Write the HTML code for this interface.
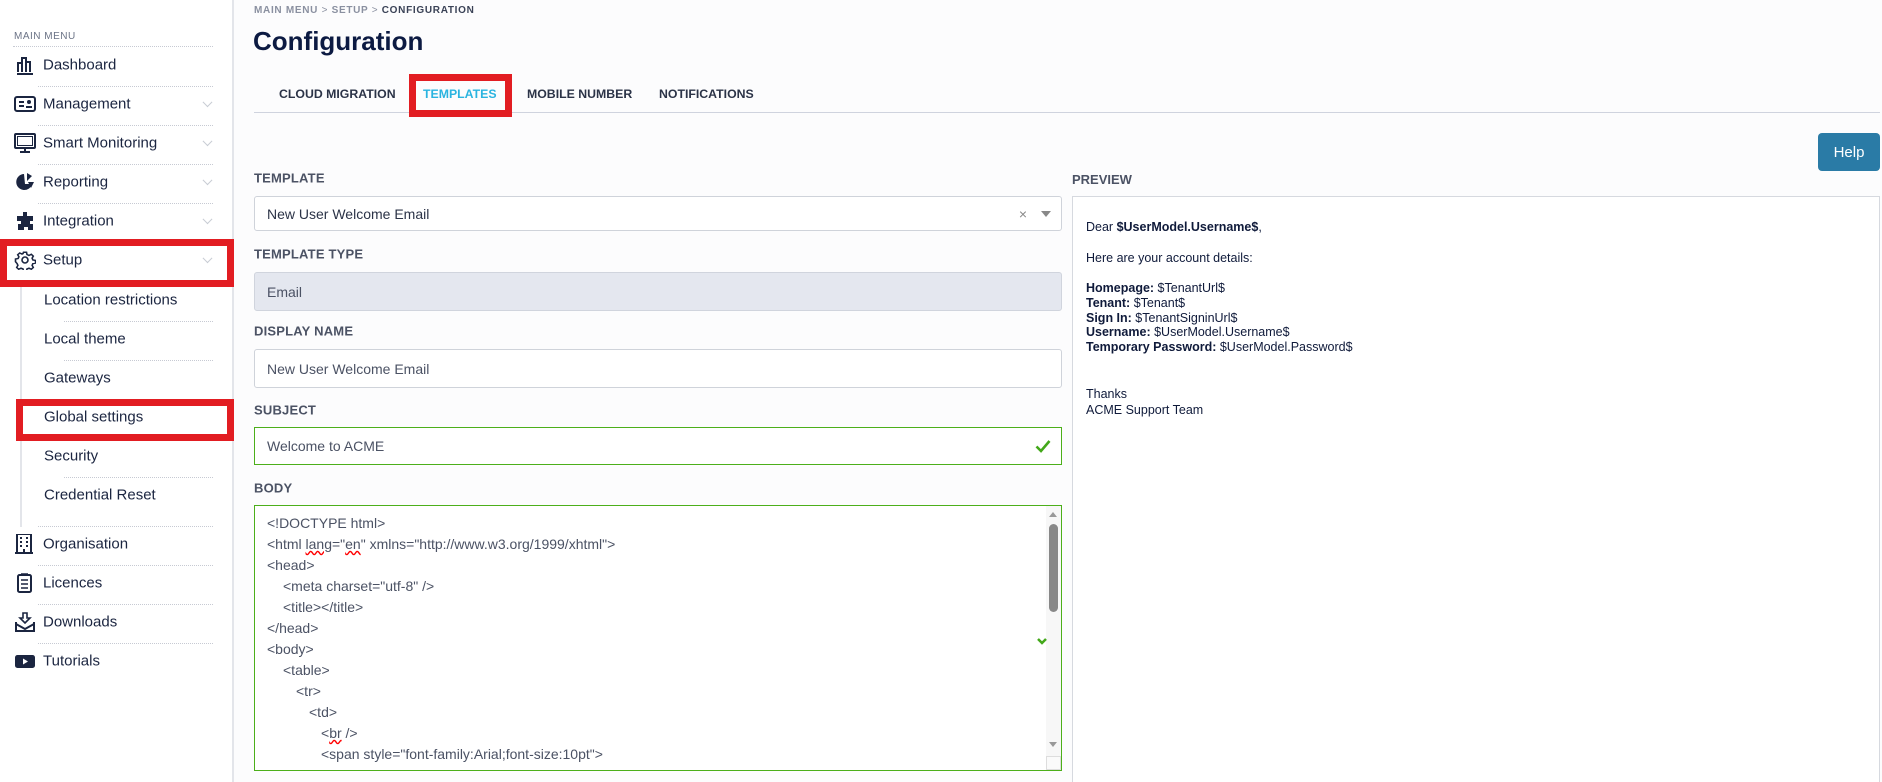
<!DOCTYPE html>
<html><head><meta charset="utf-8"><style>
*{box-sizing:border-box;margin:0;padding:0}
html,body{width:1882px;height:782px;overflow:hidden}
body{background:#fcfcfd;font-family:"Liberation Sans",Arial,sans-serif;position:relative;color:#1b2540}
.abs{position:absolute}
.sb{position:absolute;left:0;top:0;width:234px;height:782px;background:#fff;border-right:2px solid #e3e5ea}
.mm{position:absolute;left:14px;top:31px;font-size:10px;color:#6b7386;letter-spacing:.5px}
.div{position:absolute;border-top:1px dotted #c7cad3;height:0}
.it{position:absolute;left:43px;font-size:15px;color:#1b2540;transform:translateY(-50%)}
.ic{position:absolute;left:14px;width:22px;height:20px;transform:translateY(-50%)}
.chev{position:absolute;left:204px;width:7px;height:7px;border-right:1px solid #c8ccd4;border-bottom:1px solid #c8ccd4;transform:translateY(-75%) rotate(45deg)}
.red{position:absolute;border:7px solid #e21d22}
.lbl{position:absolute;left:254px;font-size:13px;color:#4b5264;font-weight:bold;letter-spacing:.2px;transform:translateY(-50%)}
.box{position:absolute;left:254px;width:808px;border:1px solid #cfd3da;border-radius:3px;background:#fff;font-size:14px;color:#4b5264;padding-left:12px;display:flex;align-items:center}
.code{position:absolute;left:267px;font-size:14px;color:#4b5264;white-space:pre;transform:translateY(-50%)}
.pv{position:absolute;left:1086px;font-family:Arial,"Liberation Sans",sans-serif;font-size:12.5px;color:#0f1a3a;white-space:pre}
.tab{position:absolute;top:94px;font-size:12.3px;font-weight:bold;color:#2b3347;transform:translateY(-50%)}
</style></head><body>
<div class="sb"></div>
<div class="mm">MAIN MENU</div>
<div class="div" style="left:13px;top:46px;width:200px"></div>
<svg class="ic" style="top:65px" viewBox="0 0 22 20"><g fill="none" stroke="#1b2540" stroke-width="2"><path d="M4 17V8h4v9M8 17V3h4v14M12 17V7h4v10"/><path d="M3 19h16"/></g></svg>
<div class="it" style="top:65px">Dashboard</div>
<div class="div" style="left:38px;top:86px;width:175px"></div>
<svg class="ic" style="top:104px" viewBox="0 0 22 20"><rect x="1" y="3" width="20" height="14" rx="2" fill="none" stroke="#1b2540" stroke-width="2"/><path d="M5 8h5M5 12h5" stroke="#1b2540" stroke-width="2"/><circle cx="15" cy="8" r="2" fill="#1b2540"/><path d="M12 13h6" stroke="#1b2540" stroke-width="2"/></svg>
<div class="it" style="top:104px">Management</div><div class="chev" style="top:104px"></div>
<div class="div" style="left:38px;top:125px;width:175px"></div>
<svg class="ic" style="top:143px" viewBox="0 0 22 20"><rect x="1" y="1" width="20" height="14" rx="1" fill="none" stroke="#1b2540" stroke-width="2"/><rect x="3.5" y="3.5" width="15" height="9" fill="none" stroke="#1b2540" stroke-width="1"/><path d="M11 15v3M6 19h10" stroke="#1b2540" stroke-width="2"/></svg>
<div class="it" style="top:143px">Smart Monitoring</div><div class="chev" style="top:143px"></div>
<div class="div" style="left:38px;top:164px;width:175px"></div>
<svg class="ic" style="top:182px" viewBox="0 0 22 20"><path d="M10 2A8 8 0 1 0 18 12L11 12Z" fill="#1b2540"/><path d="M13 1l5 3-5 5z" fill="#1b2540"/><path d="M14 10h6l-3 6z" fill="#1b2540"/></svg>
<div class="it" style="top:182px">Reporting</div><div class="chev" style="top:182px"></div>
<div class="div" style="left:38px;top:203px;width:175px"></div>
<svg class="ic" style="top:221px" viewBox="0 0 22 20"><path d="M9 1h4v4h6v5h-3v3h3v6h-5v-3h-4v3H4v-6h3v-3H3V5h6z" fill="#1b2540"/></svg>
<div class="it" style="top:221px">Integration</div><div class="chev" style="top:221px"></div>
<div class="red" style="left:0;top:239px;width:234px;height:48px"></div>
<svg class="ic" style="top:260px" viewBox="0 0 22 20"><circle cx="11" cy="10" r="3" fill="none" stroke="#1b2540" stroke-width="1.6"/><path d="M9.5 1.5h3l.5 2.5 2 1 2.3-1.2 2 2-1.2 2.3.8 2 2.6.5v3l-2.6.5-.8 2 1.2 2.3-2 2-2.3-1.2-2 .8-.5 2.5h-3l-.5-2.5-2-.8-2.3 1.2-2-2 1.2-2.3-.8-2L1.5 12V9l2.6-.5.8-2L3.7 4.3l2-2L8 3.5l1-.5z" transform="scale(1 .9) translate(0 1)" fill="none" stroke="#1b2540" stroke-width="1.6"/></svg>
<div class="it" style="top:260px">Setup</div><div class="chev" style="top:260px"></div>
<div class="abs" style="left:20px;top:287px;width:2px;height:240px;background:#e3e5ea"></div>
<div class="it" style="top:300px;left:44px">Location restrictions</div>
<div class="div" style="left:64px;top:321px;width:149px"></div>
<div class="it" style="top:339px;left:44px">Local theme</div>
<div class="div" style="left:64px;top:360px;width:149px"></div>
<div class="it" style="top:378px;left:44px">Gateways</div>
<div class="red" style="left:16px;top:399px;width:218px;height:42px"></div>
<div class="it" style="top:417px;left:44px">Global settings</div>
<div class="it" style="top:456px;left:44px">Security</div>
<div class="div" style="left:64px;top:477px;width:149px"></div>
<div class="it" style="top:495px;left:44px">Credential Reset</div>
<div class="div" style="left:38px;top:526px;width:175px"></div>
<svg class="ic" style="top:544px" viewBox="0 0 22 20"><rect x="3" y="0" width="14" height="19" fill="none" stroke="#1b2540" stroke-width="2"/><path d="M1 19h18" stroke="#1b2540" stroke-width="2"/><g fill="#1b2540"><rect x="6" y="3" width="2" height="2"/><rect x="12" y="3" width="2" height="2"/><rect x="6" y="7" width="2" height="2"/><rect x="12" y="7" width="2" height="2"/><rect x="6" y="11" width="2" height="2"/><rect x="12" y="11" width="2" height="2"/><rect x="9" y="15" width="2" height="4"/></g></svg>
<div class="it" style="top:544px">Organisation</div>
<div class="div" style="left:38px;top:565px;width:175px"></div>
<svg class="ic" style="top:583px" viewBox="0 0 22 20"><rect x="4" y="2" width="13" height="17" rx="1.5" fill="none" stroke="#1b2540" stroke-width="2"/><path d="M7 1h7M7 7h7M7 11h7M7 15h7" stroke="#1b2540" stroke-width="1.5"/></svg>
<div class="it" style="top:583px">Licences</div>
<div class="div" style="left:38px;top:604px;width:175px"></div>
<svg class="ic" style="top:622px" viewBox="0 0 22 20"><path d="M2 10v9h18v-9" fill="none" stroke="#1b2540" stroke-width="2"/><path d="M2 12l9 5 9-5" fill="none" stroke="#1b2540" stroke-width="2"/><path d="M9 1h4v5h3l-5 5-5-5h3z" fill="none" stroke="#1b2540" stroke-width="1.6"/></svg>
<div class="it" style="top:622px">Downloads</div>
<div class="div" style="left:38px;top:643px;width:175px"></div>
<svg class="ic" style="top:661px" viewBox="0 0 22 20"><rect x="1" y="4" width="20" height="13" rx="2.5" fill="#1b2540"/><path d="M9 7.5v6l5-3z" fill="#fff"/></svg>
<div class="it" style="top:661px">Tutorials</div>

<div class="abs" style="left:254px;top:5px;font-size:10px;font-weight:bold;letter-spacing:.7px;color:#8a90a0">MAIN MENU <span style="font-weight:normal">&gt;</span> SETUP <span style="font-weight:normal">&gt;</span> <span style="color:#3a4256">CONFIGURATION</span></div>
<div class="abs" style="left:253px;top:26px;font-size:26px;font-weight:bold;color:#0c1a42">Configuration</div>
<div class="tab" style="left:279px">CLOUD MIGRATION</div>
<div class="tab" style="left:423px;color:#2ab4e0">TEMPLATES</div>
<div class="tab" style="left:527px">MOBILE NUMBER</div>
<div class="tab" style="left:659px">NOTIFICATIONS</div>
<div class="abs" style="left:254px;top:112px;width:1626px;height:1px;background:#cfd3de"></div>
<div class="red" style="left:409px;top:74px;width:103px;height:43px"></div>
<div class="abs" style="left:1818px;top:133px;width:62px;height:38px;background:#2a7ba6;border-radius:4px;color:#fff;font-size:15px;display:flex;align-items:center;justify-content:center">Help</div>

<div class="lbl" style="top:178px">TEMPLATE</div>
<div class="box" style="top:196px;height:35px;color:#2b3347">New User Welcome Email<span style="position:absolute;right:34px;color:#888;font-size:14px">×</span><span style="position:absolute;right:10px;width:0;height:0;border-left:5px solid transparent;border-right:5px solid transparent;border-top:6px solid #888"></span></div>
<div class="lbl" style="top:254px">TEMPLATE TYPE</div>
<div class="box" style="top:272px;height:39px;background:#e4e7ef;border-color:#d0d4dd">Email</div>
<div class="lbl" style="top:331px">DISPLAY NAME</div>
<div class="box" style="top:349px;height:39px">New User Welcome Email</div>
<div class="lbl" style="top:410px">SUBJECT</div>
<div class="box" style="top:427px;height:38px;border:1px solid #4caf1a;border-radius:0">Welcome to ACME<svg style="position:absolute;right:10px" width="16" height="14" viewBox="0 0 16 14"><path d="M1.5 7.5l4.5 4.5 8.5-10" fill="none" stroke="#43a81a" stroke-width="2.6"/></svg></div>
<div class="lbl" style="top:488px">BODY</div>
<div class="abs" style="left:254px;top:505px;width:808px;height:266px;border:1px solid #4caf1a;background:#fff"></div>
<div class="abs" style="left:1046px;top:506px;width:15px;height:250px;background:#f7f7f7"></div>
<div class="abs" style="left:1049px;top:512px;width:0;height:0;border-left:4px solid transparent;border-right:4px solid transparent;border-bottom:5px solid #999"></div>
<div class="abs" style="left:1049px;top:524px;width:9px;height:88px;background:#888;border-radius:5px"></div>
<div class="abs" style="left:1049px;top:742px;width:0;height:0;border-left:4px solid transparent;border-right:4px solid transparent;border-top:5px solid #999"></div>
<div class="abs" style="left:1046px;top:756px;width:15px;height:14px;border:1px solid #ddd;background:#fafafa"></div>
<svg class="abs" style="left:1036px;top:636px" width="12" height="10" viewBox="0 0 12 10"><path d="M2 3l4 4 4-4" fill="none" stroke="#43a81a" stroke-width="2.5"/></svg>
<div class="code" style="top:523px">&lt;!DOCTYPE html&gt;</div>
<div class="code" style="top:544px">&lt;html <span style="text-decoration:underline wavy red">lang</span>="<span style="text-decoration:underline wavy red">en</span>" xmlns="http://www.w3.org/1999/xhtml"&gt;</div>
<div class="code" style="top:565px">&lt;head&gt;</div>
<div class="code" style="top:586px;left:283px">&lt;meta charset="utf-8" /&gt;</div>
<div class="code" style="top:607px;left:283px">&lt;title&gt;&lt;/title&gt;</div>
<div class="code" style="top:628px">&lt;/head&gt;</div>
<div class="code" style="top:649px">&lt;body&gt;</div>
<div class="code" style="top:670px;left:283px">&lt;table&gt;</div>
<div class="code" style="top:691px;left:296px">&lt;tr&gt;</div>
<div class="code" style="top:712px;left:309px">&lt;td&gt;</div>
<div class="code" style="top:733px;left:321px">&lt;<span style="text-decoration:underline wavy red">br</span> /&gt;</div>
<div class="code" style="top:754px;left:321px">&lt;span style="font-family:Arial;font-size:10pt"&gt;</div>

<div class="abs" style="left:1072px;top:172px;font-size:13px;font-weight:bold;color:#4b5264">PREVIEW</div>
<div class="abs" style="left:1072px;top:196px;width:808px;height:600px;border:1px solid #d6d9df;background:#fff"></div>
<div class="pv" style="top:220px">Dear <b>$UserModel.Username$</b>,</div>
<div class="pv" style="top:251px">Here are your account details:</div>
<div class="pv" style="top:281px"><b>Homepage:</b> $TenantUrl$</div>
<div class="pv" style="top:296px"><b>Tenant:</b> $Tenant$</div>
<div class="pv" style="top:311px"><b>Sign In:</b> $TenantSigninUrl$</div>
<div class="pv" style="top:325px"><b>Username:</b> $UserModel.Username$</div>
<div class="pv" style="top:340px"><b>Temporary Password:</b> $UserModel.Password$</div>
<div class="pv" style="top:387px">Thanks</div>
<div class="pv" style="top:403px">ACME Support Team</div>
</body></html>
